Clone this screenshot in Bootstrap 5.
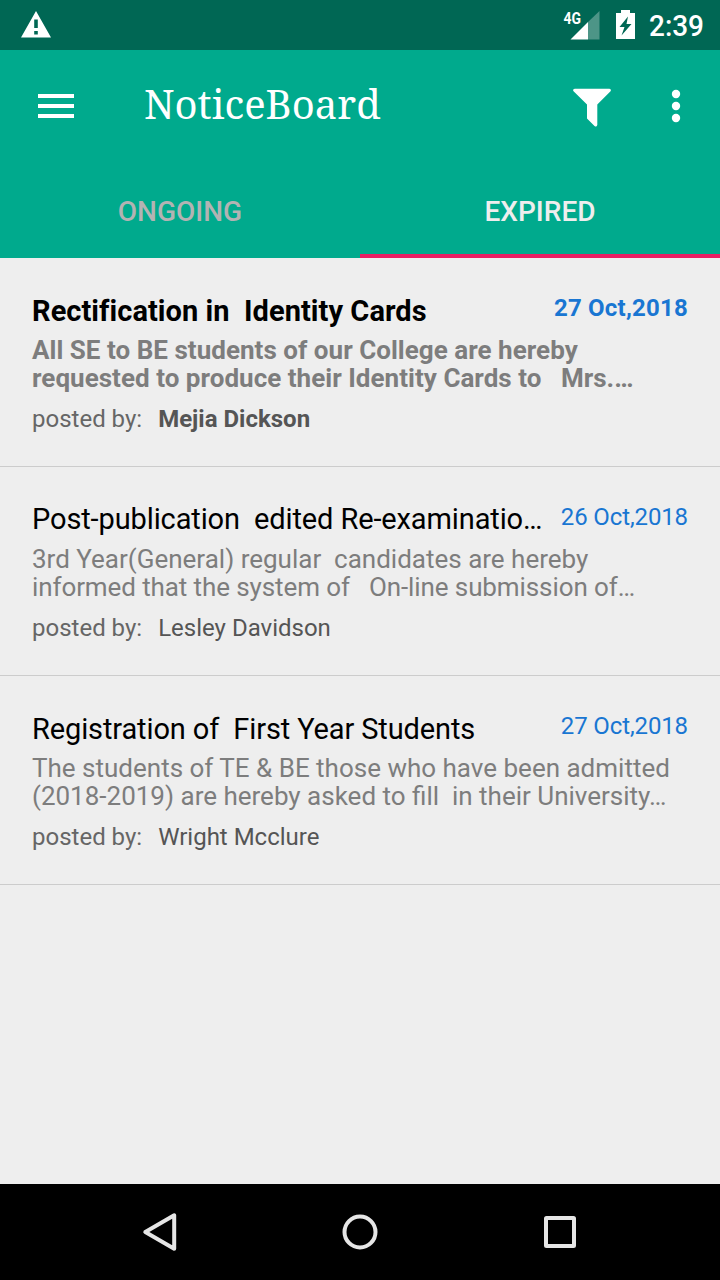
<!DOCTYPE html>
<html lang="en">
<head>
<meta charset="utf-8">
<meta name="viewport" content="width=device-width, initial-scale=1">
<title>NoticeBoard</title>
<link href="https://cdn.jsdelivr.net/npm/bootstrap@5.3.0/dist/css/bootstrap.min.css" rel="stylesheet">
<style>
body{font-family:Roboto,"Noto Sans",sans-serif;background:#eee;height:1280px;overflow:hidden}
svg{display:block;flex:none}
.status-bar{height:50px;background:#006754;color:#fff}
.app-bar{background:#00aa8d;height:208px}
.toolbar{height:112px;color:#fff}
.app-title{font:400 40px/56px "Noto Serif","DejaVu Serif Condensed","DejaVu Serif",serif;margin-bottom:4px}
.tabs .nav-link{height:96px;line-height:100px;font-size:28px;font-weight:500;color:#b3b3b3;border-bottom:4px solid transparent;border-radius:0}
.tabs .nav-link.active{color:#eee;border-color:#e91e63}
.notice{height:209px;padding:35px 32px 0;border-bottom:1px solid #ccc}
.notice-title,.notice-date,.notice-text{white-space:pre}
.notice-title{font-size:29px;line-height:36px;color:#000;letter-spacing:-.12px}
.notice-title.raised{line-height:34px;margin-bottom:2px}
.notice-date{font-size:24px;line-height:30px;color:#1976d2;letter-spacing:-.12px}
.notice-text{font-size:26px;line-height:28px;color:#7d7d7d;margin-top:7px}
.notice-by{font-size:24px;line-height:28px;color:#666;margin-top:13px}
.notice-by .who{color:#555;margin-left:16px}
.unread .notice-title,.unread .notice-date,.unread .notice-text,.unread .who{font-weight:700}
.unread .notice-title{letter-spacing:.05px}
.unread .notice-date{letter-spacing:.22px}
.unread .notice-text{letter-spacing:.03px}
.tight{letter-spacing:-.1px}
.system-nav{height:96px;background:#000}
</style>
</head>
<body class="d-flex flex-column">
<div class="status-bar d-flex align-items-center flex-shrink-0">
  <svg width="720" height="50" viewBox="0 0 720 50" fill="#fff" font-family="Roboto,sans-serif">
    <path fill-rule="evenodd" d="M36 11 51 37.5H21ZM34.2 19.5h3.6v8.5h-3.6ZM34.2 31h3.6v3.5h-3.6Z"/>
    <text x="563.5" y="23.5" font-size="16" font-weight="700" textLength="17.5" lengthAdjust="spacingAndGlyphs">4G</text>
    <path d="M599.500 11V39.500H588V22Z" opacity=".3"/>
    <path d="M588 22V39.500H570.500Z"/>
    <path fill-rule="evenodd" d="M616 13h5v-3h9v3h5v26h-19ZM628 16.500 619.500 27h5L621.500 35.500 631.500 24h-5Z"/>
    <text x="649" y="36" font-size="29" font-weight="500" textLength="55" lengthAdjust="spacingAndGlyphs">2:39</text>
  </svg>
</div>
<header class="app-bar flex-shrink-0">
  <div class="toolbar d-flex align-items-center">
    <svg width="144" height="112" fill="#fff"><path d="M38 44h36v4H38zM38 54h36v4H38zM38 64h36v4H38z"/></svg>
    <div class="app-title flex-grow-1">NoticeBoard</div>
    <svg width="170" height="112" viewBox="550 50 170 112" fill="#fff">
      <path d="M575 88.700H609.500Q611.500 89 610.800 91L597.300 104.500V125Q596.500 127.500 594.500 126L587 118.500V104.500L573.300 91Q572.500 89 575 88.700Z"/>
      <circle cx="676" cy="94" r="4.200"/><circle cx="676" cy="106" r="4.200"/><circle cx="676" cy="118" r="4.200"/>
    </svg>
  </div>
  <nav class="tabs nav nav-fill flex-nowrap">
    <a class="nav-link w-50 p-0" href="#">ONGOING</a>
    <a class="nav-link w-50 p-0 active" href="#">EXPIRED</a>
  </nav>
</header>
<main class="flex-grow-1">
  <article class="notice unread">
    <div class="d-flex justify-content-between"><div class="notice-title">Rectification in  Identity Cards</div><div class="notice-date">27 Oct,2018</div></div>
    <div class="notice-text">All SE to BE students of our College are hereby
requested to produce their Identity Cards to   Mrs.…</div>
    <div class="notice-by d-flex"><span>posted by:</span><span class="who">Mejia Dickson</span></div>
  </article>
  <article class="notice">
    <div class="d-flex justify-content-between"><div class="notice-title raised">Post-publication  edited Re-examinatio…</div><div class="notice-date">26 Oct,2018</div></div>
    <div class="notice-text"><div>3rd Year(General) regular  candidates are hereby</div><div class="tight">informed that the system of   On-line submission of…</div></div>
    <div class="notice-by d-flex"><span>posted by:</span><span class="who">Lesley Davidson</span></div>
  </article>
  <article class="notice">
    <div class="d-flex justify-content-between"><div class="notice-title">Registration of  First Year Students</div><div class="notice-date">27 Oct,2018</div></div>
    <div class="notice-text">The students of TE &amp; BE those who have been admitted
(2018-2019) are hereby asked to fill  in their University…</div>
    <div class="notice-by d-flex"><span>posted by:</span><span class="who">Wright Mcclure</span></div>
  </article>
</main>
<footer class="system-nav flex-shrink-0">
  <svg width="720" height="96" viewBox="0 1184 720 96" fill="none" stroke="#e6e6e6" stroke-width="4" stroke-linejoin="round">
    <path d="M174.200 1215.300V1248.700L145.300 1232Z"/>
    <circle cx="360" cy="1232" r="15.500"/>
    <rect x="546" y="1218" width="28" height="28" rx=".5"/>
  </svg>
</footer>
<script src="https://cdn.jsdelivr.net/npm/bootstrap@5.3.0/dist/js/bootstrap.bundle.min.js"></script>
</body>
</html>
